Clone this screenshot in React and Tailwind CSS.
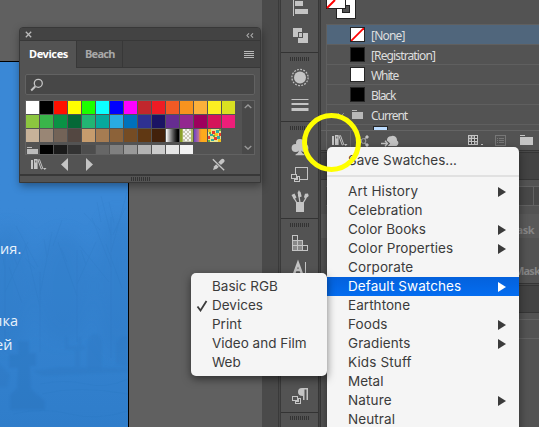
import React from "react";

const L = "#c4c4c4";

const ROW1 = ["#ffffff", "#000000", "#ff1000", "#ffff00", "#1cff00", "#0cffff", "#0000ff", "#ff00ff", "#c1272d", "#ed1c24", "#f15a24", "#f7931e", "#fbb03b", "#fcee21", "#d9e021"];
const ROW2 = ["#8cc63f", "#39b54a", "#0a9245", "#056837", "#22b573", "#06a99d", "#29abe2", "#0071bc", "#2e3192", "#1b1464", "#662d91", "#93278f", "#9e005d", "#d4145a", "#ed1e79"];
const ROW3 = ["#c7b299", "#998675", "#736357", "#534741", "#c69c6d", "#a67c52", "#8c6239", "#754c24", "#603813", "#42210b"];
const ROW4 = ["#000000", "#1a1a1a", "#333333", "#4d4d4d", "#666666", "#808080", "#999999", "#b3b3b3", "#cccccc", "#e6e6e6", "#f2f2f2"];

function Chip({ color }) {
  return <div className="h-[13px] w-[13px] shrink-0" style={{ background: color }} />;
}

function Grip() {
  return (
    <svg className="block shrink-0" width="19" height="4" viewBox="0 0 19 4" shapeRendering="crispEdges">
      {Array.from({ length: 10 }, (_, i) => (
        <rect key={i} x={i * 2} y="0" width="1" height="4" fill="#333" />
      ))}
    </svg>
  );
}

function Books() {
  return (
    <svg className="block shrink-0" width="16" height="12" viewBox="0 0 16 12" fill={L}>
      <path d="M0 1h2v9H0zM3 0h3.6v10H3z" />
      <path d="M4.3 1.5h1v2h-1z" fill="#535353" />
      <path d="M7 1.2l1.5-.6 3.2 8.7-1.5.7z" fill="none" stroke={L} strokeWidth="1" />
      <path d="M12 9h3.5l-1.75 2z" />
    </svg>
  );
}

function Folder() {
  return (
    <svg className="block shrink-0" width="13" height="10" viewBox="0 0 13 10" fill={L}>
      <path d="M0 0h5v1H0zM0 2h13v8H0z" />
    </svg>
  );
}

function Artboard() {
  return (
    <div className="flex w-[262px] shrink-0 flex-col bg-[#606060] pt-[61px]">
      <div className="relative w-[129px] flex-1 overflow-hidden border-t border-r border-black bg-linear-to-b from-[#3a88d6] from-40% to-[#2f7dca]">
        <svg className="absolute inset-0" width="128" height="366" viewBox="0 0 128 366">
          <defs>
            <filter id="soft"><feGaussianBlur stdDeviation="1.2" /></filter>
            <filter id="haze"><feGaussianBlur stdDeviation="8" /></filter>
          </defs>
          <g fill="#2c75be" filter="url(#haze)" opacity=".25">
            <ellipse cx="8" cy="225" rx="24" ry="60" />
            <ellipse cx="63" cy="225" rx="29" ry="54" />
            <ellipse cx="117" cy="222" rx="22" ry="70" />
          </g>
          <g stroke="#286eb5" strokeWidth=".7" fill="none" opacity=".2">
            <path d="M40 290V210M40 245L25 182M40 232L52 170M38 205L16 164M53 184L62 158M77 280V188M77 234L58 180M77 222L96 180M111 296V155M111 205L92 156M111 190L127 130M111 173L101 134M109 220L80 184M5 290V192M5 230L28 180M5 207L-3 162M122 226L106 182M22 241L9 205" />
            <path d="M101 160L97 140M100 168L84 151M113 173L125 146M114 161L109 140M35 207L25 196M47 195L44 177M67 200L61 186M86 203L81 188M17 203L10 184" />
          </g>
          <g fill="#2468ad" opacity=".2" filter="url(#soft)">
            <path d="M18 279h11v12h7v13h-6l1 23 14 12v9H10v-15l7-7 1-20H9v-14h9z" />
            <path d="M65 275h3v9h10v-9h3v9h4v4h-5v17h-5v-17H65zM87 307v-24q1-10 8-11 7 1 7 11v24zM116 302v-19q3-10 12-9v31z" opacity=".6" />
            <path d="M33 309l27-4 68 1v4l-85 4zM-2 300l12 13-3 12H-2z" opacity=".7" />
          </g>
          <g stroke="#266fb8" opacity=".14">
            <path d="M40 322q26-5 46 0t42-5M42 332q35-9 86 0M13 352q31-7 57 0t58-3" fill="none" />
          </g>
        </svg>
        <div className="relative pt-[175px] font-['Open_Sans',sans-serif] text-[14.5px] leading-[24px] whitespace-nowrap text-[#e9f2fb]">
          <div className="tracking-[0.1px]">ия.</div>
          <div className="mt-[48px] ml-[-6px] tracking-[0.1px]">лка</div>
          <div className="ml-[-5px]">ей</div>
        </div>
      </div>
    </div>
  );
}

function DockGroup({ children, className }) {
  return <div className={"flex shrink-0 flex-col items-center border-b border-[#333] pt-[4px] " + className}>{children}</div>;
}

function Dock() {
  return (
    <div className="flex w-[59px] shrink-0">
      <div className="w-[16px] bg-[#4a4a4a]" />
      <div className="w-[3px] border-x border-[#3a3a3a] bg-[#484848]" />
      <div className="flex w-[37px] flex-col bg-[#535353]">
        <div className="h-[53px] shrink-0 border-b border-[#333]">
          <svg className="block" width="37" height="52" viewBox="0 0 37 52" shapeRendering="crispEdges">
            <path d="M12 0h1v16h-1zM14 1h8v5h-8zM14 9h13v5H14z" fill={L} />
            <path d="M12 28h9v9h-9zM17 33h10v10H17z" fill={L} />
            <path d="M17 32h5v6h-5z" fill="#535353" />
            <path d="M18 33h3v4h-3z" fill={L} />
          </svg>
        </div>
        <DockGroup className="h-[69px]">
          <Grip />
          <svg className="mt-[6px] block" width="20" height="46" viewBox="0 0 20 46">
            <circle cx="10" cy="10.5" r="6" fill={L} />
            <circle cx="10" cy="10.5" r="8.1" fill="none" stroke={L} strokeWidth="1.2" strokeDasharray="1.8 1.38" />
            <path d="M1.5 32h17v1h-17zM1.5 36h17v2h-17zM1.5 41h17v3h-17z" fill={L} />
          </svg>
        </DockGroup>
        <DockGroup className="h-[97px]">
          <Grip />
          <svg className="mt-[8px] block" width="20" height="78" viewBox="0 0 20 78" fill={L}>
            <circle cx="10" cy="5" r="4" />
            <circle cx="5.6" cy="10" r="4" />
            <circle cx="14.4" cy="10" r="4" />
            <path d="M9 8h2v4.5q.5 3 3.5 4v.7h-9v-.7q3-1 3.5-4z" />
            <g fill={L} shapeRendering="crispEdges">
              <path d="M5 29h13v13h-8v-1h7V30H6v6H5z" />
              <path d="M1 36h6v5H1zM7 38h3v6H4v-3h3z" />
              <path d="M2 37h4v3H2zM8 39h1v4H5v-1h3z" fill="#535353" />
            </g>
            <path d="M6 64h8v10H6z" />
            <path d="M7 65L4 60M10 65l-1-7M13 65l3-5" fill="none" stroke={L} strokeWidth="1.3" />
            <path d="M1.5 57l3-1.5 2 4-2.5 2zM7.5 54.5l3-.8 1.2 4.8-3 1zM14 59l1-3.2 3-.3.7 2.5-3.5 3zM12 64l1-5" />
            <path d="M8 58V54l1-2 1 2v4z" />
          </svg>
        </DockGroup>
        <DockGroup className="h-[194px]">
          <Grip />
          <svg className="mt-[7px] block" width="20" height="175" viewBox="0 0 20 175" fill={L}>
            <g shapeRendering="crispEdges">
              <path d="M2 1h6v5h5v5h5v6H2z" />
              <path d="M3 2h4v4H3zM13 12h4v4h-4z" fill="#535353" />
              <path d="M3 7h4v4H3zM8 7h4v4H8zM3 12h4v4H3zM8 12h4v4H8z" fill="#888" />
            </g>
            <path d="M4 40l4-11 4 11M5.5 36h5" strokeWidth="2.4" stroke={L} fill="none" />
            <path d="M15 28h1v14h-1z" shapeRendering="crispEdges" />
            <path d="M12 154h6v12h-1.5v-10.5h-2V166h-1.5v-4q-5 0-5-4t4-4z" />
            <g shapeRendering="crispEdges">
              <path d="M2 162h6v5H2zM8 164h3v6H5v-3h3z" />
              <path d="M3 163h4v3H3zM9 165h1v4H6v-1h3z" fill="#535353" />
            </g>
          </svg>
        </DockGroup>
        <div className="flex justify-center pt-[3px]"><Grip /></div>
      </div>
      <div className="w-[3px] border-x border-[#373737] bg-[#444]" />
    </div>
  );
}

function SwatchRow({ name, color, none, active, tracking }) {
  return (
    <div className={"flex h-[20px] shrink-0 items-center border-b border-[#5f5f5f] pl-[23px] " + (active ? "bg-[#50667c]" : "")}>
      <div className="h-[15px] w-[15px] border border-[#262626]" style={{ background: color }}>
        {none && (
          <svg className="block" width="13" height="13" viewBox="0 0 13 13">
            <path d="M0 13L13 0" stroke="#f00" strokeWidth="1.8" />
          </svg>
        )}
      </div>
      <div className={"ml-[6px] pt-[2px] leading-[18px] " + tracking}>{name}</div>
    </div>
  );
}

function RightPanel() {
  return (
    <div className="flex w-[218px] shrink-0 flex-col bg-[#535353] font-['Noto_Sans',sans-serif] text-[12px] text-[#dedede]">
      <div className="h-[24px] shrink-0 pl-[5px]">
        <svg className="block" width="32" height="20" viewBox="0 0 32 20" shapeRendering="crispEdges">
          <path d="M10 0h20v19H10z" fill="#222" />
          <path d="M11 0h18v18H11z" fill="#fff" />
          <path d="M16 5h8v8h-8z" fill="#222" />
          <path d="M17 6h6v6h-6z" fill="#535353" />
          <path d="M0 0h20v9H0z" fill="#222" />
          <path d="M1 0h18v8H1z" fill="#fff" />
          <path d="M1 8l8-8" stroke="#f00" strokeWidth="2" shapeRendering="auto" />
        </svg>
      </div>
      <div className="ml-[5px] flex h-[106px] shrink-0 flex-col border-t border-l border-[#5f5f5f]">
        <SwatchRow name="[None]" color="#fff" none active tracking="tracking-[-0.8px]" />
        <SwatchRow name="[Registration]" color="#000" tracking="tracking-[-0.87px]" />
        <SwatchRow name="White" color="#fff" tracking="tracking-[-1.1px]" />
        <SwatchRow name="Black" color="#000" tracking="tracking-[-1.1px]" />
        <div className="flex h-[20px] shrink-0 items-center border-b border-[#5f5f5f] pl-[10px]">
          <svg className="block" width="8" height="6" viewBox="0 0 8 6"><path d="M1 1l3 3 3-3" fill="none" stroke="#8d8d8d" /></svg>
          <svg className="ml-[7px] block" width="11" height="9" viewBox="0 0 11 9" fill="#b8b8b8"><path d="M0 0h5v1H0zM0 2h11v7H0z" /></svg>
          <div className="ml-[8px] pt-[2px] leading-[18px] tracking-[-1px]">Current</div>
        </div>
        <div className="ml-[46px] mt-[1px] h-[4px] w-[15px] border border-b-0 border-[#262626] bg-[#bcdcff]" />
      </div>
      <div className="flex h-[20px] shrink-0 items-start border-t border-[#646464] pl-[5px]">
        <div className="flex h-[19px] w-[25px] items-start border-x border-[#666] pt-[4px] pl-[5px]"><Books /></div>
        <svg className="mt-[4px] ml-[4px] block" width="14" height="12" viewBox="0 0 14 12" fill={L} stroke={L}>
          <path d="M1 1l11.5 9.5M1 11L12.5 1.5" />
          <circle cx="8.5" cy="6" r="2.4" fill="#535353" stroke="#a5a5a5" />
          <circle cx="12" cy="2" r="1.2" /><circle cx="12" cy="10" r="1.2" />
        </svg>
        <svg className="mt-[4px] ml-[12px] block" width="19" height="13" viewBox="0 0 19 13" fill={L}>
          <path d="M6 11a3.5 3.5 0 0 1 0-6 3.6 3.6 0 0 1 4-3.8 4.3 4.3 0 0 1 6 4.2A3.2 3.2 0 0 1 15.5 11z" />
          <path d="M0 8.5h6M4 5.8L7 8.5 4 11.5" stroke="#535353" strokeWidth="3" fill="none" />
          <path d="M0 8.5h6M4 5.8L6.5 8.5 4 11.2" stroke={L} strokeWidth="1.3" fill="none" />
        </svg>
        <svg className="mt-[4px] ml-[68px] block" width="16" height="12" viewBox="0 0 16 12" shapeRendering="crispEdges">
          <path d="M0 0h10v10H0z" fill={L} />
          <path d="M1 1h2v2H1zM4 1h2v2H4zM1 4h2v2H1zM7 7h2v2H7z" fill="#777" />
          <path d="M7 1h2v2H7zM4 4h2v2H4zM7 4h2v2H7zM1 7h2v2H1zM4 7h2v2H4z" fill="#444" />
          <path d="M12 9h3l-1 1h-1z" fill={L} />
        </svg>
        <svg className="mt-[4px] ml-[11px] block" width="11" height="11" viewBox="0 0 11 11" shapeRendering="crispEdges">
          <path d="M.5.5h10v10H.5zM2 3.5h1M4 3.5h5M2 5.5h1M4 5.5h5M2 7.5h1M4 7.5h5" fill="none" stroke="#777" />
        </svg>
        <div className="mt-[4px] ml-[14px]"><Folder /></div>
      </div>
      <div className="h-[3px] shrink-0 border-y border-[#363636] bg-[#4a4a4a]" />
      <div className="h-[27px] shrink-0 border-b border-[#363636] bg-[#434343]" />
      <div className="mt-[6px] ml-[5px] flex h-[20px] shrink-0 justify-end border-y border-[#626262] bg-[#484848]">
        <div className="w-[6px] border-l border-[#626262]" />
      </div>
      <div className="mt-[8px] flex h-[24px] shrink-0 items-end justify-end overflow-hidden bg-[#595959] pr-[5px] text-[11px] font-bold text-[#858585]">
        <span className="tracking-[-0.5px]">Mask</span>
      </div>
      <div className="flex h-[45px] shrink-0 items-end justify-end pb-[4px] text-[11px] font-bold text-[#858585]">
        <span className="-mr-[1px] tracking-[-0.8px]">Mask</span>
      </div>
      <div className="h-[3px] shrink-0 border-y border-[#363636] bg-[#4a4a4a]" />
      <div className="h-[27px] shrink-0 border-b border-[#363636] bg-[#434343]" />
      <div className="mt-[6px] h-[20px] shrink-0 border-y border-[#626262]" />
    </div>
  );
}

function SwatchWindow() {
  return (
    <div className="absolute top-[27px] left-[19px] flex h-[156px] w-[242px] flex-col overflow-hidden rounded-t-[4px] border border-[#383838] bg-[#535353] font-['Noto_Sans',sans-serif] shadow-[1px_3px_9px_rgba(0,0,0,0.38)]">
      <div className="flex h-[13px] shrink-0 items-center justify-between border-b border-[#383838] bg-[#434343] pr-[6px] pl-[5px]">
        <svg className="mt-[1px] block" width="7" height="7" viewBox="0 0 7 7"><path d="M.8.8l5.4 5.4M6.2.8L.8 6.2" stroke="#bbb" strokeWidth="1.3" /></svg>
        <svg className="mt-[2px] block" width="8" height="5" viewBox="0 0 8 5"><path d="M3 .3L1 2.5l2 2.2M7 .3L5 2.5l2 2.2" stroke="#aaa" strokeWidth="1.1" fill="none" /></svg>
      </div>
      <div className="flex h-[27px] shrink-0 bg-[#434343] text-[11px] font-bold">
        <div className="w-[57px] border-r border-[#383838] bg-[#535353] pl-[9px] leading-[26px] tracking-[-0.4px] text-white">Devices</div>
        <div className="w-[46px] border-r border-b border-[#383838] pl-[8px] leading-[26px] tracking-[-0.7px] text-[#a8a8a8]">Beach</div>
        <div className="flex flex-1 items-start justify-end border-b border-[#383838] pt-[10px] pr-[6px]">
          <svg className="block" width="10" height="7" viewBox="0 0 10 7" shapeRendering="crispEdges"><path d="M0 0h10v1H0zM0 2h10v1H0zM0 4h10v1H0zM0 6h10v1H0z" fill="#b8b8b8" /></svg>
        </div>
      </div>
      <div className="mt-[6px] ml-[5px] flex h-[21px] w-[230px] shrink-0 items-center rounded-[2px] border border-[#626262] bg-[#474747] pl-[4px]">
        <svg className="block" width="14" height="14" viewBox="0 0 14 14" fill="none" stroke={L}><circle cx="8.3" cy="5.3" r="4" strokeWidth="1.3" /><path d="M5.2 8.5L1.2 12.5" strokeWidth="1.9" /></svg>
      </div>
      <div className="mt-[5px] ml-[5px] flex h-[55px] w-[230px] shrink-0 justify-between border border-[#626262]">
        <div className="flex flex-col gap-[1px]">
          <div className="flex gap-[1px]">{ROW1.map((c, i) => <Chip key={i} color={c} />)}</div>
          <div className="flex gap-[1px]">{ROW2.map((c, i) => <Chip key={i} color={c} />)}</div>
          <div className="flex gap-[1px]">
            {ROW3.map((c, i) => <Chip key={i} color={c} />)}
            <div className="h-[13px] w-[13px] bg-linear-to-r from-white to-black" />
            <svg className="block" width="13" height="13" viewBox="0 0 13 13" shapeRendering="crispEdges">
              <rect width="13" height="13" fill="#c9c8b4" />
              <path d="M3 0h2v2H3zM7 0h2v2H7zM5 2h2v2H5zM9 2h2v2H9zM3 4h2v2H3zM7 4h2v2H7zM5 6h2v2H5zM9 6h2v2H9zM3 8h2v2H3zM7 8h2v2H7zM5 10h2v2H5zM9 10h2v2H9z" fill="#f6f5ef" />
              <path d="M0 0h2v13H0z" fill="#8ba128" /><path d="M2 0h1v13H2zM11 0h2v13h-2z" fill="#a9b75c" />
            </svg>
            <div className="h-[13px] w-[13px] bg-[linear-gradient(to_right,#6e3fc4,#b5709e_35%,#f0942f_45%,#fdaa1c_60%,#fdaa1c)]" />
            <svg className="block" width="13" height="13" viewBox="0 0 13 13">
              <rect width="13" height="13" fill="#e9e58c" />
              <path d="M0 0h3v3H0zM6 4h4v3H6zM10 10h3v3h-3z" fill="#f3c31f" />
              <path d="M4 2h3v3H4zM0 7h2v3H0zM6 8h3v3H6zM11 4h2v3h-2z" fill="#e83a2b" />
              <path d="M8 1h3v3H8zM2 5h3v2H2zM3 10h3v2H3zM9 7h3v3H9z" fill="#35a9a0" />
              <path d="M1 3h2v2H1zM5 6h2v2H5zM0 11h2v2H0zM11 0h2v2h-2z" fill="#6cae3c" />
            </svg>
          </div>
          <div className="mt-[2px] flex h-[9px] gap-[1px] overflow-hidden">
            <div className="flex w-[13px] justify-center pt-[2px]"><svg className="block" width="11" height="7" viewBox="0 0 11 7" fill="#bdbdbd"><path d="M0 0h5v1H0zM0 2h11v5H0z" /></svg></div>
            {ROW4.map((c, i) => <Chip key={i} color={c} />)}
          </div>
        </div>
        <div className="flex w-[12px] flex-col items-center justify-between bg-[#494949] pt-[3px] pr-[1px] pb-[4px]">
          <svg className="block" width="8" height="5" viewBox="0 0 8 5"><path d="M.7 4L4 1l3.3 3" stroke="#999" fill="none" strokeWidth="1.3" /></svg>
          <svg className="block" width="8" height="5" viewBox="0 0 8 5"><path d="M.7 1L4 4l3.3-3" stroke="#999" fill="none" strokeWidth="1.3" /></svg>
        </div>
      </div>
      <div className="flex h-[19px] shrink-0 items-start pt-[3px] pl-[11px]">
        <div className="mt-[1px]"><Books /></div>
        <svg className="ml-[14px] block" width="7" height="13" viewBox="0 0 7 13"><path d="M7 0v13L0 6.5z" fill={L} /></svg>
        <svg className="ml-[18px] block" width="7" height="13" viewBox="0 0 7 13"><path d="M0 0v13l7-6.5z" fill={L} /></svg>
        <svg className="ml-[119px] block" width="13" height="13" viewBox="0 0 13 13">
          <path d="M1 12l1.2-3.8 3-3 2.6 2.6-3 3z" fill={L} />
          <path d="M6.2 4.4L9 1.6Q10.8.2 12 1.4t0 2.8L8.9 7.1z" fill={L} />
          <path d="M.8 1.2l11.4 11" stroke="#535353" strokeWidth="2.6" />
          <path d="M.8 1.2l11.4 11" stroke={L} strokeWidth="1.3" />
        </svg>
      </div>
      <div className="flex flex-1 justify-center border-t-2 border-[#383838] pt-[1px]"><Grip /></div>
    </div>
  );
}

const ITEMS = [
  ["Art History", true, "tracking-[0.15px]"],
  ["Celebration", false, "tracking-[0.1px]"],
  ["Color Books", true, "tracking-[0px]"],
  ["Color Properties", true, "tracking-[0.08px]"],
  ["Corporate", false, "tracking-[0.1px]"],
  ["Default Swatches", true, "tracking-[0.08px]"],
  ["Earthtone", false, "tracking-[0.05px]"],
  ["Foods", true, "tracking-[0.1px]"],
  ["Gradients", true, "tracking-[0.1px]"],
  ["Kids Stuff", false, "tracking-[0.15px]"],
  ["Metal", false, "tracking-[0px]"],
  ["Nature", true, "tracking-[0.15px]"],
  ["Neutral", false, "tracking-[0.1px]"],
];

function Menu() {
  return (
    <div className="absolute top-[147px] left-[327px] h-[290px] w-[192px] rounded-t-[5px] bg-[#f5f5f5] font-['Inter',sans-serif] text-[13.5px] leading-[19px] text-[#3b3b3b] shadow-[0_3px_10px_rgba(0,0,0,0.45)]">
      <div className="h-[28px] pt-[4px] pl-[21px]">Save Swatches...</div>
      <div className="mb-[5px] h-[2px] bg-[#e1e1e1]" />
      {ITEMS.map(([name, sub, track]) => (
        <div key={name} className={"flex h-[19px] items-center justify-between pr-[13px] pl-[21px] " + track + (name === "Default Swatches" ? " bg-linear-to-b from-[#0461dc] to-[#046df0] text-white" : "")}>
          <span>{name}</span>
          {sub && <svg className="block" width="8" height="10" viewBox="0 0 8 10"><path d="M0 0v10l8-5z" fill="currentColor" /></svg>}
        </div>
      ))}
    </div>
  );
}

function Submenu() {
  return (
    <div className="absolute top-[273px] left-[191px] h-[103px] w-[136px] rounded-[5px] bg-[#f5f5f5] pt-[4px] font-['Inter',sans-serif] text-[13.5px] leading-[19px] text-[#3b3b3b] shadow-[0_3px_9px_rgba(0,0,0,0.5)]">
      {["Basic RGB", "Devices", "Print", "Video and Film", "Web"].map((name) => (
        <div key={name} className="flex h-[19px] items-center">
          <div className="flex w-[21px] justify-end pr-[4px]">
            {name === "Devices" && <svg className="block" width="12" height="12" viewBox="0 0 12 12"><path d="M1.5 6.5l3 4L10.5 1" stroke="#3b3b3b" strokeWidth="1.8" fill="none" /></svg>}
          </div>
          <span>{name}</span>
        </div>
      ))}
    </div>
  );
}

export default function App() {
  return (
    <div className="relative flex h-[427px] w-[539px] overflow-hidden">
      <Artboard />
      <Dock />
      <RightPanel />
      <SwatchWindow />
      <Menu />
      <Submenu />
      <div className="absolute top-[113px] left-[302px] h-[59px] w-[59px] rounded-full border-[5px] border-[#ffff00]" />
    </div>
  );
}
